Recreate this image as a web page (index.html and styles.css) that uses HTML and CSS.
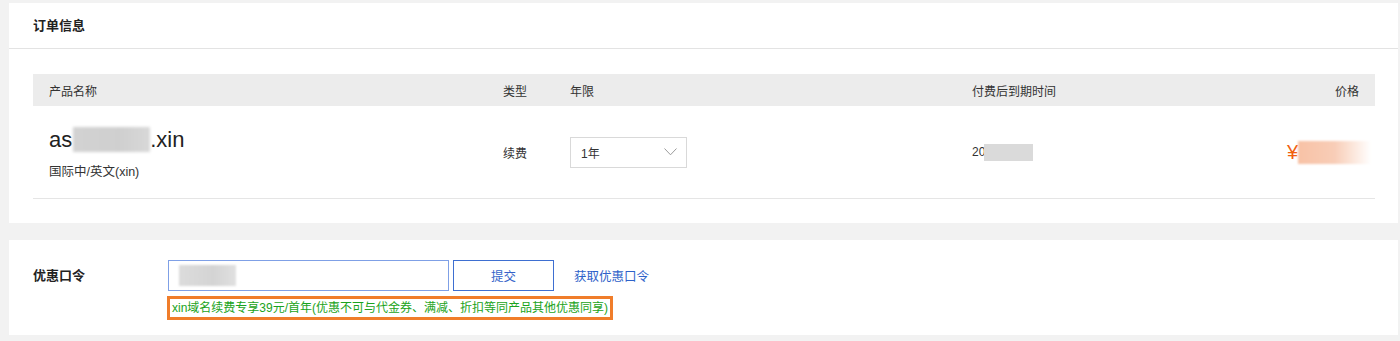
FILE: index.html
```html
<!DOCTYPE html>
<html lang="zh-CN">
<head>
<meta charset="utf-8">
<link rel="stylesheet" href="styles.css">
</head>
<body>
<div class="page">
  <section class="card order">
    <div class="card-head">订单信息</div>
    <div class="table">
      <div class="thead">
        <div class="c-name">产品名称</div>
        <div class="c-type">类型</div>
        <div class="c-year">年限</div>
        <div class="c-exp">付费后到期时间</div>
        <div class="c-price">价格</div>
      </div>
      <div class="trow">
        <div class="c-name">
          <div class="domain">as<span class="blur-dom"></span>.xin</div>
          <div class="domain-sub">国际中/英文(xin)</div>
        </div>
        <div class="c-type">续费</div>
        <div class="c-year">
          <div class="select"><span>1年</span>
            <svg class="chev" width="13" height="8" viewBox="0 0 13 8"><path d="M0.5 0.5 L6.5 6.8 L12.5 0.5" fill="none" stroke="#9a9a9a" stroke-width="1"/></svg>
          </div>
        </div>
        <div class="c-exp"><span class="exp-text">20</span><span class="blur-date"></span></div>
        <div class="c-price"><span class="yen">¥</span><span class="blur-price"></span></div>
      </div>
    </div>
  </section>
  <section class="card promo">
    <div class="promo-label">优惠口令</div>
    <div class="promo-body">
      <div class="promo-line">
        <div class="promo-input"><span class="blur-code"></span></div>
        <button class="promo-btn">提交</button>
        <a class="promo-link">获取优惠口令</a>
      </div>
      <div class="promo-note">xin域名续费专享39元/首年(优惠不可与代金券、满减、折扣等同产品其他优惠同享)</div>
    </div>
  </section>
</div>
</body>
</html>
```
FILE: styles.css
```css
html, body {
  margin: 0;
  background: #f2f2f2;
}
body {
  font-family: "Liberation Sans", Arial, "Noto Sans CJK SC", sans-serif;
  color: #333;
  font-size: 12px;
}
.page {
  padding: 3px 2px 0 9px;
  display: flex;
  flex-direction: column;
  gap: 17px;
}
.card {
  background: #fff;
}
.order {
  padding-bottom: 24px;
}
.card-head {
  height: 45px;
  line-height: 45px;
  padding-left: 24px;
  font-size: 13px;
  font-weight: bold;
  color: #222;
  border-bottom: 1px solid #e3e3e3;
}
.table {
  margin: 25px 23px 0 24px;
}
.thead, .trow {
  display: grid;
  grid-template-columns: 454px 67px 402px 1fr 200px;
  padding: 0 16px;
  align-items: center;
}
.thead {
  height: 32px;
  background: #ececec;
  color: #333;
}
.trow {
  height: 92px;
  border-bottom: 1px solid #e5e5e5;
}
.domain {
  font-size: 22px;
  line-height: 26px;
  color: #222;
  display: flex;
  align-items: center;
  margin-top: 2px;
}
.blur-dom {
  display: inline-block;
  width: 77px;
  height: 25px;
  background: linear-gradient(90deg, #d2d2d2, #cfcfcf 60%, #d8d8d8);
  filter: blur(1.5px);
  margin-left: 1px;
}
.domain-sub {
  margin-top: 8px;
  font-size: 12.5px;
  color: #333;
}
.c-type {
  color: #333;
}
.select {
  width: 117px;
  height: 31px;
  border: 1px solid #d9d9d9;
  box-sizing: border-box;
  display: flex;
  align-items: center;
  justify-content: space-between;
  padding: 0 9px 0 10px;
  margin-top: 1px;
}
.select span {
  color: #333;
}
.chev {
  display: block;
  margin-top: -1px;
}
.c-exp {
  display: flex;
  align-items: center;
}
.blur-date {
  display: inline-block;
  width: 49px;
  height: 17px;
  background: #dadada;
  margin-left: -1px;
}
.c-price {
  display: flex;
  justify-content: flex-end;
  align-items: center;
}
.yen {
  color: #f06010;
  font-size: 20px;
  line-height: 24px;
}
.blur-price {
  display: inline-block;
  width: 73px;
  height: 23px;
  background: linear-gradient(90deg, #f8c2a6 0%, #f8cdb7 50%, #fff 100%);
  filter: blur(1px);
  margin-right: -12px;
}
.promo {
  display: flex;
  padding: 20px 24px 15px 24px;
}
.promo-label {
  width: 135px;
  font-size: 13px;
  font-weight: bold;
  color: #222;
  line-height: 31px;
}
.promo-body {
  display: flex;
  flex-direction: column;
  gap: 5px;
}
.promo-line {
  display: flex;
  align-items: center;
}
.promo-input {
  width: 281px;
  height: 31px;
  box-sizing: border-box;
  border: 1px solid #7fa0e6;
  padding: 4px 10px;
}
.blur-code {
  display: block;
  width: 57px;
  height: 21px;
  background: linear-gradient(90deg, #dcdcdc, #d4d4d4 60%, #e0e0e0);
  filter: blur(1px);
}
.promo-btn {
  margin-left: 4px;
  width: 101px;
  height: 31px;
  box-sizing: border-box;
  border: 1px solid #3e6fd1;
  background: #fff;
  color: #3563c9;
  font-family: "Liberation Sans", Arial, "Noto Sans CJK SC", sans-serif;
  font-size: 12.5px;
  padding: 0;
}
.promo-link {
  margin-left: 20px;
  color: #2e62c9;
  font-size: 12.5px;
}
.promo-note {
  align-self: flex-start;
  margin-left: -1px;
  border: 3px solid #f07d2a;
  padding: 0 2px;
  height: 18px;
  line-height: 18px;
  color: #1aa320;
  font-size: 12px;
}
```
